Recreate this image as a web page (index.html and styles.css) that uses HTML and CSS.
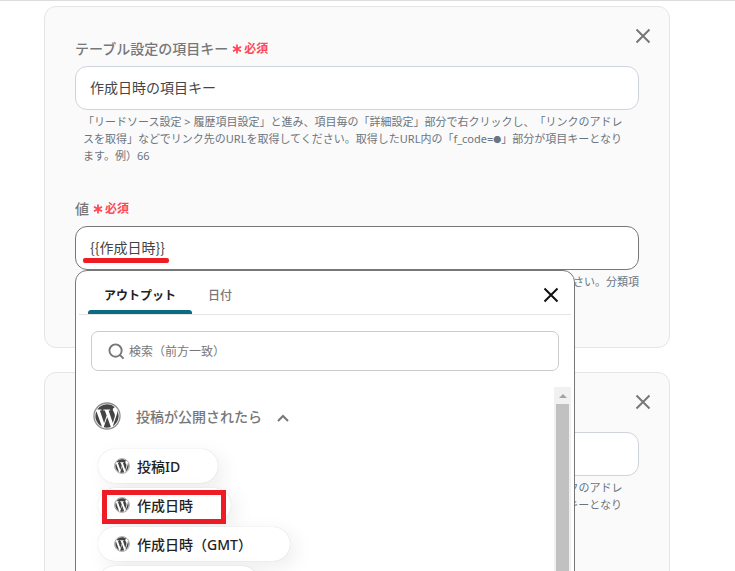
FILE: index.html
```html
<!DOCTYPE html>
<html lang="ja">
<head>
    <meta charset="UTF-8">
    <meta name="viewport" content="width=device-width, initial-scale=1.0">
    <title>テーブル設定</title>
    <link rel="stylesheet" href="styles.css">
</head>
<body>

<!-- Shared icons -->
<svg class="sprite" aria-hidden="true">
    <symbol id="icon-close" viewBox="0 0 16 16">
        <path d="M1.5 1.5l13 13M14.5 1.5l-13 13" fill="none" stroke="currentColor" stroke-width="2"/>
    </symbol>
    <symbol id="icon-required" viewBox="0 0 10 10">
        <path d="M5 0.5v9M1 2.7l8 4.6M9 2.7L1 7.3" fill="none" stroke="currentColor" stroke-width="1.8"/>
    </symbol>
    <symbol id="icon-wordpress" viewBox="0 0 512 512">
        <path fill="currentColor" d="M61.7 169.4l101.5 278C92.2 413 43.3 340.2 43.3 256c0-30.9 6.6-60.1 18.4-86.6zm337.9 75.9c0-26.3-9.4-44.5-17.5-58.7-10.8-17.5-20.9-32.4-20.9-49.9 0-19.6 14.8-37.8 35.7-37.8.9 0 1.8.1 2.8.2-37.9-34.7-88.3-55.9-143.7-55.9-74.3 0-139.7 38.1-177.8 95.9 5 .2 9.7.3 13.7.3 22.2 0 56.7-2.7 56.7-2.7 11.5-.7 12.8 16.2 1.4 17.5 0 0-11.5 1.3-24.3 2l77.5 230.4L249.8 247l-33.1-90.8c-11.5-.7-22.3-2-22.3-2-11.5-.7-10.1-18.2 1.3-17.5 0 0 35.1 2.7 56 2.7 22.2 0 56.7-2.7 56.7-2.7 11.5-.7 12.8 16.2 1.4 17.5 0 0-11.5 1.3-24.3 2l76.9 228.7 21.2-70.9c9-29.4 16-50.5 16-68.7zm-139.9 29.3l-63.8 185.5c19.1 5.6 39.2 8.7 60.1 8.7 24.8 0 48.5-4.3 70.6-12.1-.6-.9-1.1-1.9-1.5-2.9l-65.4-179.2zm183-120.7c.9 6.8 1.4 14 1.4 21.9 0 21.6-4 45.8-16.2 76.2l-65 187.9C426.2 403 468.7 334.5 468.7 256c0-37-9.4-71.8-26-102.1z"/>
        <circle cx="256" cy="256" r="238" fill="none" stroke="currentColor" stroke-opacity="0.6" stroke-width="24"/>
    </symbol>
</svg>

<main class="page">
    <section class="card">
        <button type="button" class="card-close" aria-label="削除"><svg class="icon-close"><use href="#icon-close"/></svg></button>

        <div class="field">
            <label class="field-label" for="key1">テーブル設定の項目キー
                <span class="required"><svg class="icon-required"><use href="#icon-required"/></svg>必須</span>
            </label>
            <input type="text" class="field-input" id="key1" value="作成日時の項目キー">
            <p class="help">「リードソース設定 &gt; 履歴項目設定」と進み、項目毎の「詳細設定」部分で右クリックし、「リンクのアドレ<br>スを取得」などでリンク先のURLを取得してください。取得したURL内の「f_code=<span class="dot">●</span>」部分が項目キーとなり<br>ます。例）66</p>
        </div>

        <div class="field">
            <label class="field-label" for="value1">値
                <span class="required"><svg class="icon-required"><use href="#icon-required"/></svg>必須</span>
            </label>
            <div class="picker">
                <input type="text" class="field-input active" id="value1" value="{{作成日時}}">
                <span class="underline"></span>

                <div class="popup">
                    <div class="tabs">
                        <button type="button" class="tab selected">アウトプット</button>
                        <button type="button" class="tab">日付</button>
                        <button type="button" class="popup-close" aria-label="閉じる"><svg class="icon-close"><use href="#icon-close"/></svg></button>
                    </div>

                    <label class="search">
                        <svg class="icon-search" viewBox="0 0 18 18" fill="none" stroke="currentColor" stroke-width="2">
                            <circle cx="8" cy="8" r="6.5"/>
                            <path d="M12.5 12.5l4 4"/>
                        </svg>
                        <input type="text" class="search-input" placeholder="検索（前方一致）" aria-label="検索">
                    </label>

                    <div class="list">
                        <div class="outputs">
                            <button type="button" class="group">
                                <svg class="group-logo"><use href="#icon-wordpress"/></svg>
                                投稿が公開されたら
                                <svg class="icon-chevron" viewBox="0 0 12 8" fill="none" stroke="currentColor" stroke-width="2">
                                    <path d="M1 7l5-5 5 5"/>
                                </svg>
                            </button>
                            <button type="button" class="pill"><svg class="pill-logo"><use href="#icon-wordpress"/></svg>投稿ID</button>
                            <button type="button" class="pill"><svg class="pill-logo"><use href="#icon-wordpress"/></svg>作成日時<span class="highlight"></span></button>
                            <button type="button" class="pill"><svg class="pill-logo"><use href="#icon-wordpress"/></svg>作成日時（GMT）</button>
                            <button type="button" class="pill"><svg class="pill-logo"><use href="#icon-wordpress"/></svg>投稿タイトル</button>
                        </div>
                        <div class="scrollbar">
                            <svg class="scroll-arrow" viewBox="0 0 8 4"><path d="M0 4l4-4 4 4z" fill="#a3a3a3"/></svg>
                            <div class="thumb"></div>
                        </div>
                    </div>
                </div>
            </div>
            <p class="help help-end">ください。分類項</p>
        </div>
    </section>

    <section class="card">
        <button type="button" class="card-close" aria-label="削除"><svg class="icon-close"><use href="#icon-close"/></svg></button>

        <div class="field">
            <label class="field-label" for="key2">テーブル設定の項目キー
                <span class="required"><svg class="icon-required"><use href="#icon-required"/></svg>必須</span>
            </label>
            <input type="text" class="field-input" id="key2">
            <p class="help">「リードソース設定 &gt; 履歴項目設定」と進み、項目毎の「詳細設定」部分で右クリックし、「リンクのアドレ<br>スを取得」などでリンク先のURLを取得してください。取得したURL内の「f_code=<span class="dot">●</span>」部分が項目キーとなり<br>ます。例）66</p>
        </div>
    </section>
</main>

</body>
</html>
```

FILE: styles.css
```css
* {
    box-sizing: border-box;
}
body {
    margin: 0;
    height: 100vh;
    overflow: hidden;
    background: #fff;
    color: #444;
    font-family: "Noto Sans", "Noto Sans CJK JP", sans-serif;
    font-size: 14px;
    text-spacing-trim: space-all;
}
button,
input {
    font: inherit;
    color: inherit;
}
button {
    padding: 0;
    border: none;
    background: none;
    cursor: pointer;
}
input:focus {
    outline: none;
}
.sprite {
    display: none;
}
.page {
    display: flex;
    flex-direction: column;
    gap: 24px;
    height: 100vh;
    overflow: hidden;
    padding: 5px 65px 0 44px;
    border-top: 1px solid #ddd;
}
.card {
    position: relative;
    flex: none;
    min-height: 342px;
    padding: 30px;
    background: #fafafa;
    border: 1px solid #e5e5e5;
    border-radius: 12px;
}
.card-close {
    position: absolute;
    top: 21px;
    right: 18px;
    display: flex;
    color: #777;
}
.icon-close {
    width: 16px;
    height: 16px;
}

/* Form fields */
.field + .field {
    margin-top: 33px;
}
.field-label {
    display: flex;
    align-items: center;
    gap: 4px;
    height: 21px;
    margin-bottom: 8px;
    color: #777;
    font-weight: 500;
}
.required {
    display: flex;
    align-items: center;
    gap: 2px;
    color: #ff4757;
    font-size: 12px;
    font-weight: 700;
}
.icon-required {
    width: 10px;
    height: 10px;
    margin-top: 2px;
}
.field-input {
    display: block;
    width: 100%;
    height: 44px;
    padding: 0 14px 2px;
    background: #fff;
    border: 1px solid #ced4da;
    border-radius: 12px;
    font-family: "Noto Sans CJK JP", sans-serif;
}
.field-input.active {
    border-color: #777;
}
.help {
    margin: 3px 0 0;
    padding-left: 8px;
    color: #6c757d;
    font-size: 11px;
    line-height: 17px;
    white-space: nowrap;
}
.help-end {
    text-align: right;
}
.dot {
    font-size: 8px;
    line-height: 1;
}
.picker {
    position: relative;
}
.underline {
    position: absolute;
    left: 8px;
    bottom: 7px;
    width: 86px;
    height: 5px;
    border-radius: 2px;
    background: #ee1c25;
}

/* Output picker */
.popup {
    position: absolute;
    z-index: 1;
    top: 100%;
    left: 0;
    width: 500px;
    max-width: 100%;
    padding: 0 3px;
    background: #fff;
    border: 1px solid #777;
    border-radius: 12px;
}
.tabs {
    display: flex;
    height: 44px;
    padding: 0 12px 0 9px;
    border-bottom: 1px solid #e5e5e5;
}
.tab {
    position: relative;
    padding: 4px 16px 0;
    color: #777;
    font-size: 12px;
    font-weight: 500;
}
.tab.selected {
    color: #222;
    font-weight: 700;
}
.tab.selected::after {
    content: "";
    position: absolute;
    left: 0;
    right: 0;
    bottom: 0;
    height: 4px;
    border-radius: 3px 3px 0 0;
    background: #0b6b82;
}
.popup-close {
    display: flex;
    align-items: center;
    margin-left: auto;
    padding-top: 5px;
    color: #111;
}
.search {
    display: flex;
    align-items: center;
    gap: 4px;
    height: 40px;
    margin: 16px 12px;
    padding: 0 16px;
    border: 1px solid #ccc;
    border-radius: 7px;
    color: #777;
    font-size: 12px;
}
.icon-search {
    flex: none;
    width: 17px;
    height: 17px;
}
.search-input {
    flex: 1;
    min-width: 0;
    padding: 0;
    border: none;
    background: none;
}
.search-input::placeholder {
    color: #777;
}
.list {
    display: flex;
    height: 300px;
    overflow: hidden;
}
.outputs {
    flex: 1;
    display: flex;
    flex-direction: column;
    align-items: flex-start;
    gap: 5px;
    padding: 15px 14px 0;
}
.group {
    display: flex;
    align-items: center;
    gap: 15px;
    margin-bottom: 14px;
    color: #777;
    font-weight: 500;
}
.group-logo {
    width: 28px;
    height: 28px;
    color: #444;
}
.icon-chevron {
    width: 12px;
    height: 8px;
    margin-top: 4px;
}
.pill {
    position: relative;
    display: flex;
    flex: none;
    align-items: center;
    gap: 7px;
    height: 34px;
    margin-left: 5px;
    padding: 0 38px 0 16px;
    border-radius: 17px;
    background: #fff;
    box-shadow: 0 0 1px rgba(0, 0, 0, 0.2), 6px 6px 20px rgba(0, 0, 0, 0.07);
    color: #222;
    font-weight: 500;
}
.pill-logo {
    width: 16px;
    height: 16px;
    color: #444;
}
.highlight {
    position: absolute;
    top: 2px;
    left: 4px;
    width: 124px;
    height: 34px;
    border: 5px solid #ee1c25;
}
.scrollbar {
    display: flex;
    flex-direction: column;
    align-items: center;
    width: 17px;
    background: #f1f1f1;
}
.scroll-arrow {
    flex: none;
    width: 8px;
    height: 4px;
    margin: 7px 0 6px;
}
.thumb {
    flex: 1;
    width: 13px;
    background: #c1c1c1;
}
```
